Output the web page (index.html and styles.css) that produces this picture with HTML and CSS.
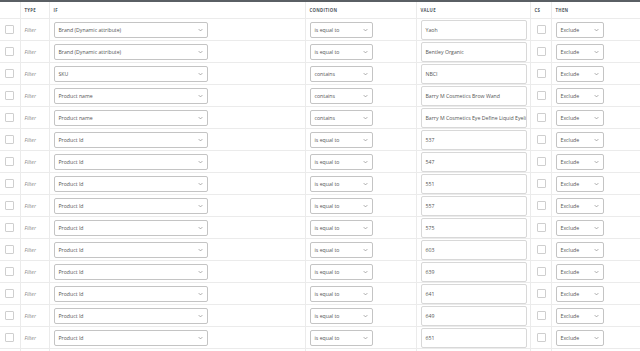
FILE: index.html
```html
<!DOCTYPE html>
<html lang="en">
<head>
    <meta charset="UTF-8">
    <title>Feed rules</title>
    <link rel="stylesheet" href="styles.css">
</head>
<body>
    <div class="topbar"></div>
    <table class="rules">
        <colgroup>
            <col class="c-check"><col class="c-type"><col class="c-if"><col class="c-cond"><col class="c-value"><col class="c-cs"><col class="c-then">
        </colgroup>
        <thead>
            <tr>
                <th></th><th>Type</th><th>If</th><th>Condition</th><th>Value</th><th>CS</th><th>Then</th>
            </tr>
        </thead>
        <tbody id="rows"></tbody>
    </table>
    <script>
        var rules = [
            ['Brand (Dynamic attribute)', 'is equal to', 'Yaoh'],
            ['Brand (Dynamic attribute)', 'is equal to', 'Bentley Organic'],
            ['SKU', 'contains', 'NBCI'],
            ['Product name', 'contains', 'Barry M Cosmetics Brow Wand'],
            ['Product name', 'contains', 'Barry M Cosmetics Eye Define Liquid Eyeli'],
            ['Product Id', 'is equal to', '537'],
            ['Product Id', 'is equal to', '547'],
            ['Product Id', 'is equal to', '551'],
            ['Product Id', 'is equal to', '557'],
            ['Product Id', 'is equal to', '575'],
            ['Product Id', 'is equal to', '603'],
            ['Product Id', 'is equal to', '639'],
            ['Product Id', 'is equal to', '641'],
            ['Product Id', 'is equal to', '649'],
            ['Product Id', 'is equal to', '651']
        ];
        var arrow = '<svg class="arrow" viewBox="0 0 8 5" width="5" height="4"><path d="M1 1 L4 4 L7 1" fill="none" stroke="#888" stroke-width="1.1"/></svg>';
        var html = '';
        rules.forEach(function (r) {
            html += '<tr>' +
                '<td><span class="box"></span></td>' +
                '<td class="type">Filter</td>' +
                '<td><div class="select sel-if"><span>' + r[0] + '</span>' + arrow + '</div></td>' +
                '<td><div class="select sel-cond"><span>' + r[1] + '</span>' + arrow + '</div></td>' +
                '<td><div class="input"><span>' + r[2] + '</span></div></td>' +
                '<td class="cs"><span class="box"></span></td>' +
                '<td><div class="select sel-then"><span>Exclude</span>' + arrow + '</div></td>' +
                '</tr>';
        });
        html += '<tr class="stub"><td></td><td></td><td></td><td></td><td></td><td></td><td></td></tr>';
        document.getElementById('rows').innerHTML = html;
    </script>
</body>
</html>
```

FILE: styles.css
```css
body {
    margin: 0;
    background: #fff;
    font-family: "Open Sans", "Noto Sans", sans-serif;
    color: #555;
    overflow: hidden;
}
.topbar {
    height: 2px;
    background: #5a5f64;
}
.rules {
    width: 640px;
    border-collapse: collapse;
    table-layout: fixed;
}
.c-check { width: 20px; }
.c-type { width: 29px; }
.c-if { width: 256px; }
.c-cond { width: 111px; }
.c-value { width: 114px; }
.c-cs { width: 21px; }
.c-then { width: 89px; }

.rules th {
    height: 16px;
    padding: 0 0 0 4px;
    text-align: left;
    font-size: 4.3px;
    font-weight: 700;
    letter-spacing: 0.3px;
    text-transform: uppercase;
    color: #50575e;
    border: 1px solid #ebebeb;
    border-top: none;
}
.rules td {
    height: 21px;
    padding: 0 0 0 4px;
    border: 1px solid #ebebeb;
    font-size: 5.2px;
    vertical-align: middle;
}
.rules td:first-child,
.rules th:first-child {
    border-left: none;
    padding-left: 5px;
}
.rules td:last-child,
.rules th:last-child {
    border-right: none;
}
.type {
    font-style: italic;
    color: #888;
}
.box {
    display: block;
    width: 7px;
    height: 7px;
    border: 1px solid #cfcfcf;
    border-radius: 1px;
    background: #fff;
}
.cs {
    padding-left: 6px !important;
}
.select {
    display: flex;
    align-items: center;
    justify-content: space-between;
    height: 16px;
    padding: 0 4px;
    border: 1px solid #c4c4c4;
    border-radius: 2px;
    background: #fff;
    color: #555;
    box-sizing: border-box;
}
.sel-if { width: 154px; }
.sel-cond { width: 63px; }
.sel-then { width: 48px; }
.arrow {
    flex: none;
}
.input {
    display: flex;
    align-items: center;
    width: 106px;
    height: 20px;
    padding: 0 4px;
    box-sizing: border-box;
    border: 1px solid #d8d8d8;
    border-radius: 2px;
    background: #fff;
    color: #555;
    overflow: hidden;
    white-space: nowrap;
}
.stub td {
    height: 8px;
}
```
